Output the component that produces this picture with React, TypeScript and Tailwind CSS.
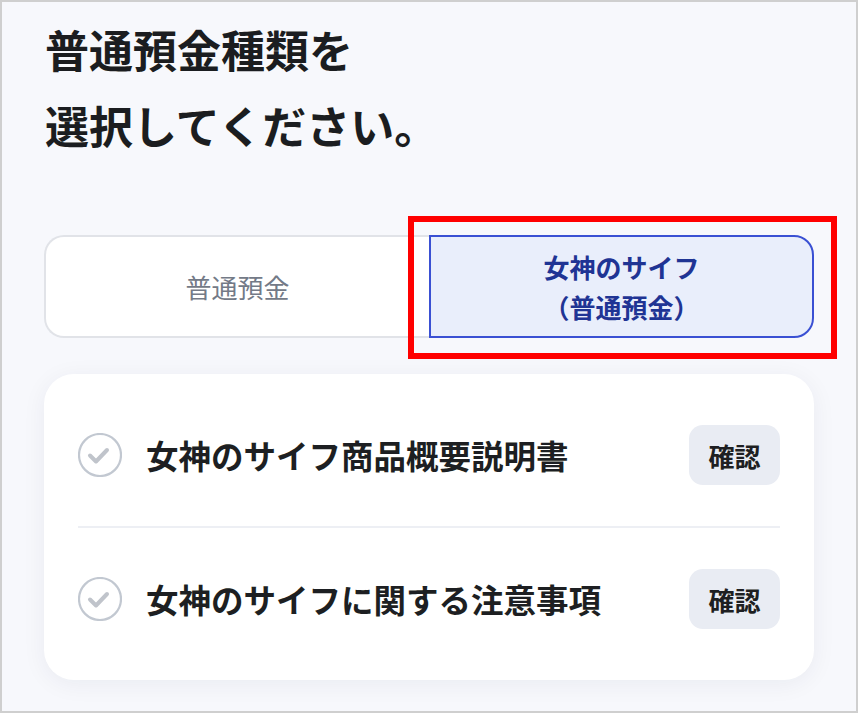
import React, { useState } from 'react';

const jp = "font-['Noto_Sans_CJK_JP',sans-serif]";

const docs = [
  { id: 'overview', title: '女神のサイフ商品概要説明書' },
  { id: 'notes', title: '女神のサイフに関する注意事項' },
];

const CheckCircle = () => (
  <svg width="44" height="44" viewBox="0 0 44 44" className="shrink-0">
    <circle cx="22" cy="22" r="21" fill="none" stroke="#c2c8d1" strokeWidth="2.2" />
    <polyline
      points="12,22.5 18,28.5 29,17"
      fill="none"
      stroke="#c0c4cb"
      strokeWidth="4"
      strokeLinecap="round"
      strokeLinejoin="round"
    />
  </svg>
);

const App: React.FC = () => {
  const [selected, setSelected] = useState<'normal' | 'megami'>('megami');

  return (
    <div className={`${jp} w-full h-[713px] bg-[#f7f8fc] border-2 border-[#cfcfcf] px-[42px] overflow-hidden`}>
      <h1 className="pt-[9px] pl-[1px] text-[44px] leading-[76px] font-bold text-[#1b1d20]">
        普通預金種類を
        <br />
        選択してください。
      </h1>

      <div className="mt-[72px] grid grid-cols-2 h-[103px]">
        <button
          onClick={() => setSelected('normal')}
          className="bg-white border-2 border-r-0 border-[#e1e3e8] rounded-l-[20px] text-[26px] text-[#737a87]"
        >
          普通預金
        </button>
        <div className="relative">
          <button
            onClick={() => setSelected('megami')}
            className={`w-full h-full rounded-r-[20px] border-2 text-[26px] leading-[40px] font-bold ${
              selected === 'megami'
                ? 'bg-[#e9eefb] border-[#3a50d3] text-[#1f3494]'
                : 'bg-white border-[#e1e3e8] text-[#737a87]'
            }`}
          >
            女神のサイフ
            <br />
            （普通預金）
          </button>
          <span className="pointer-events-none absolute -left-[21px] -top-[19px] -right-[23px] -bottom-[21px] border-[6px] border-[#ff0000]" />
        </div>
      </div>

      <div className="mt-[36px] bg-white rounded-[30px] py-[10px] shadow-[0_4px_24px_rgba(20,30,70,0.06)]">
        {docs.map((doc, i) => (
          <React.Fragment key={doc.id}>
            {i > 0 && <div className="mx-[34px] h-[2px] bg-[#edeff4]" />}
            <div className="flex items-center px-[34px] py-[41px]">
              <CheckCircle />
              <span className="ml-[24px] flex-1 text-[32.5px] font-bold text-[#1d1f22]">{doc.title}</span>
              <button className="w-[91px] h-[60px] rounded-[14px] bg-[#e9ecf3] text-[26px] font-bold text-[#1e1f22]">
                確認
              </button>
            </div>
          </React.Fragment>
        ))}
      </div>
    </div>
  );
};

export default App;
